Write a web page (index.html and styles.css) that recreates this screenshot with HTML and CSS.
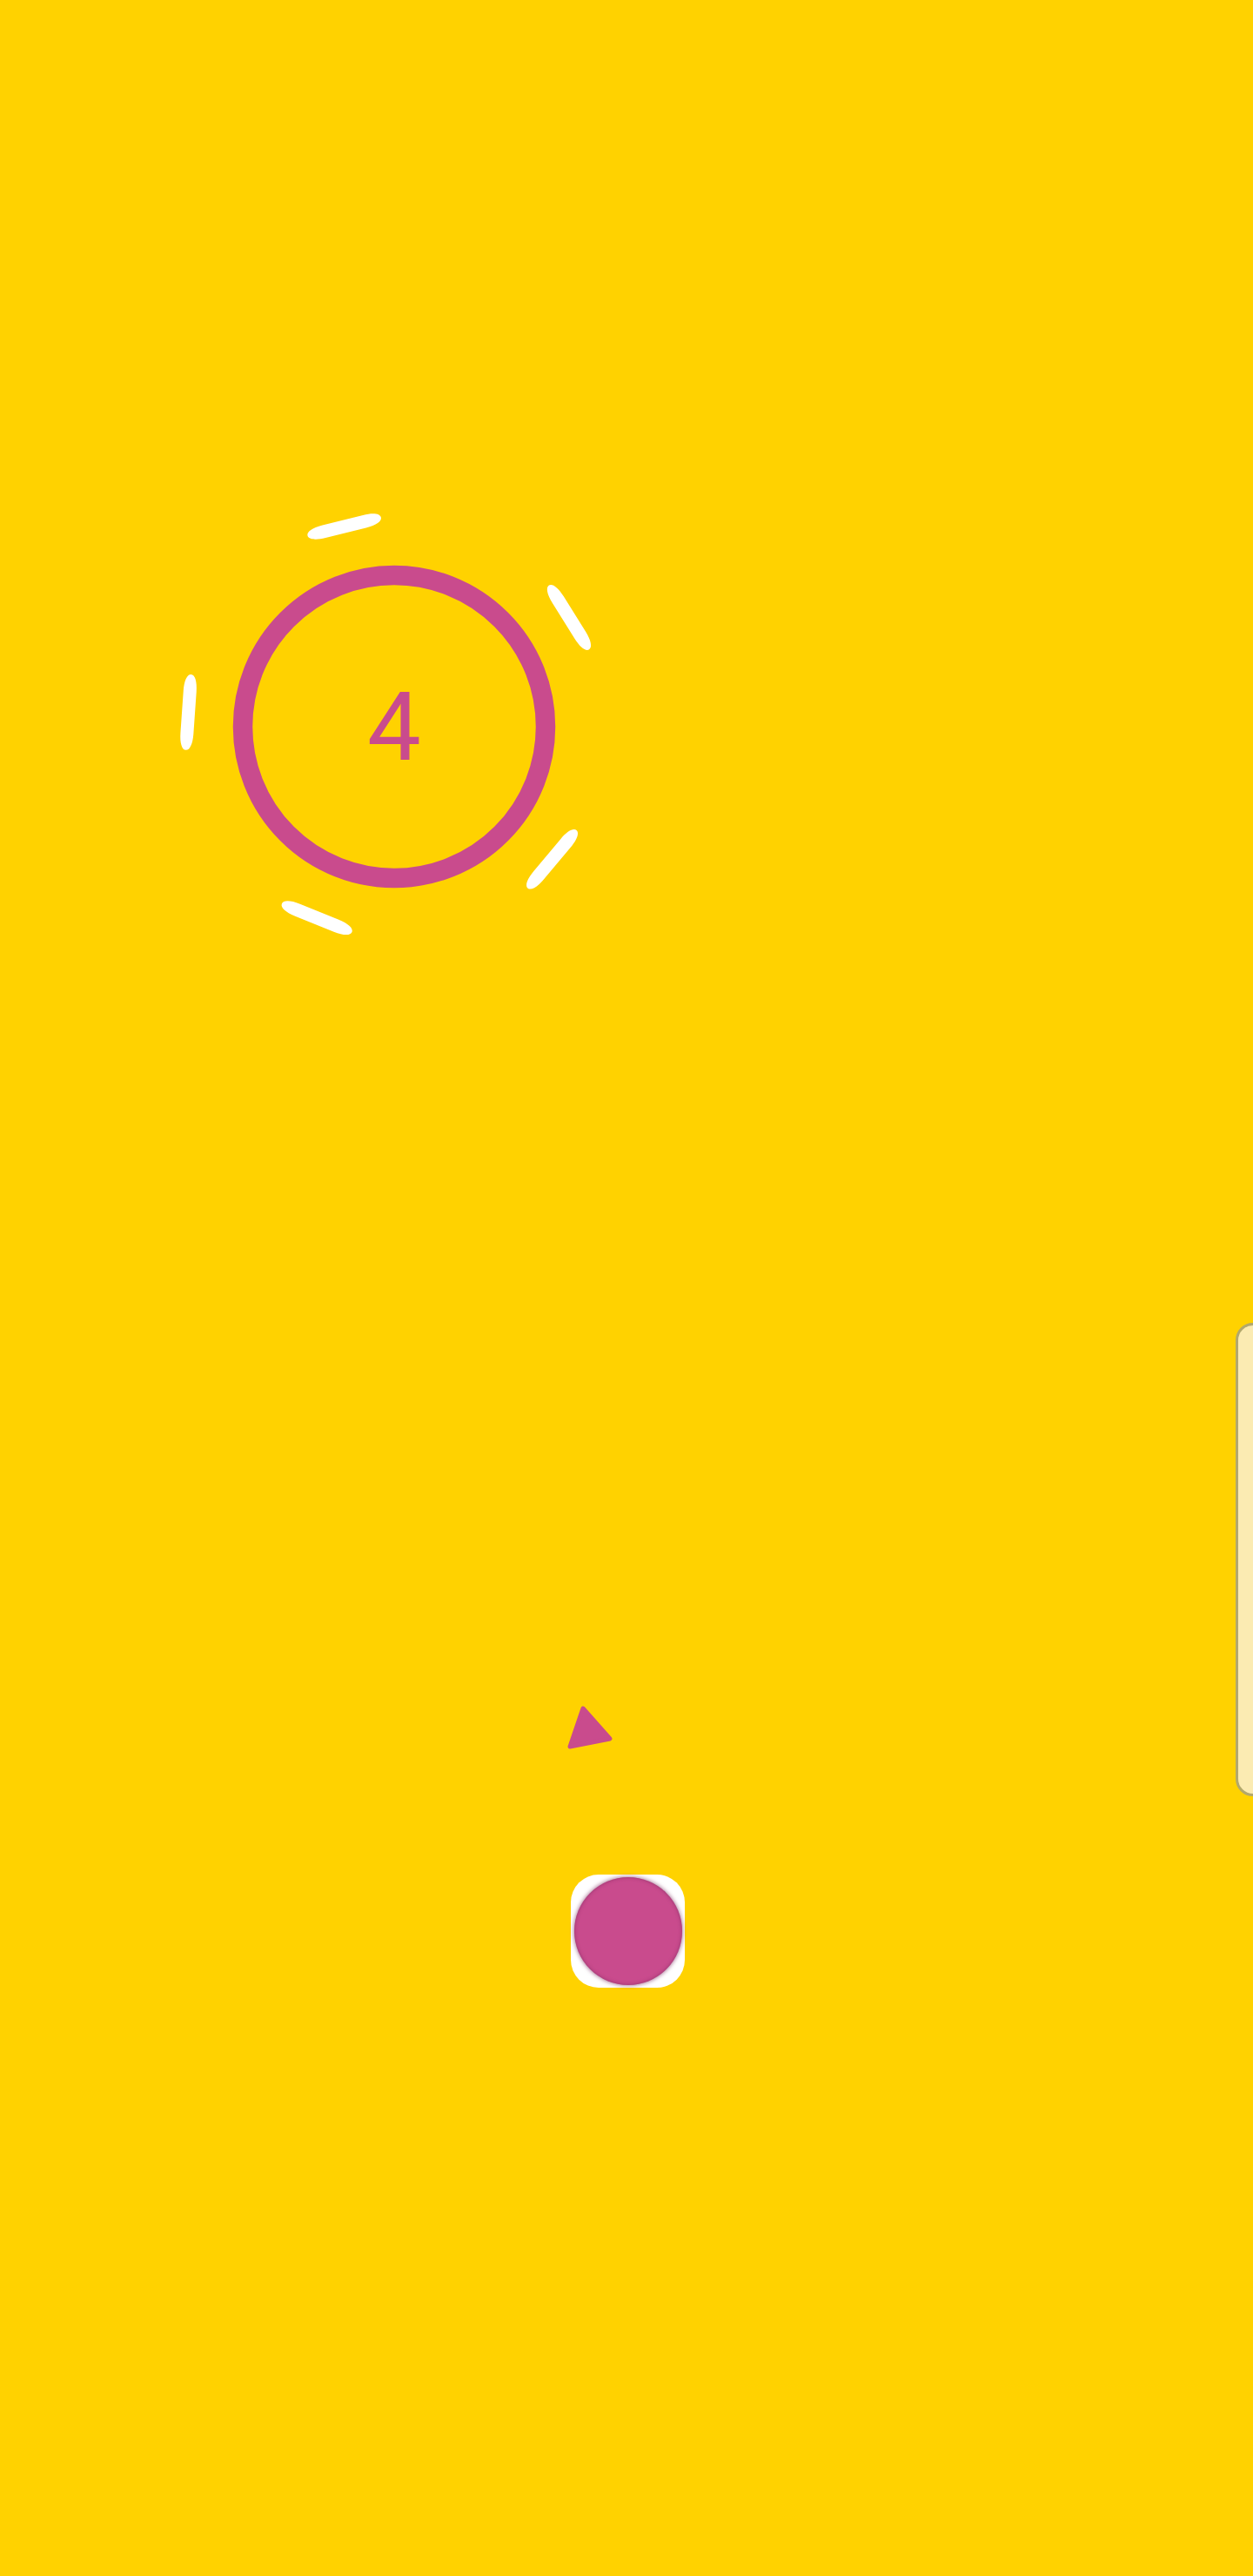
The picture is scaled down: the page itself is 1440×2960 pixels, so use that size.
FILE: index.html
```html
<!DOCTYPE html>
<html>
<head>
<meta charset="utf-8">
<link rel="stylesheet" href="styles.css">
</head>
<body>
<div class="stage">
  <div class="orbit">
    <svg class="orbit-svg" width="500" height="500" viewBox="0 0 500 500">
      <defs>
        <path id="dash" d="M487 206.5 C491.5 206.5 494.5 214 494.5 226 L494.5 274 C494.5 286 491.5 293.5 487 293.5 C482.5 293.5 479.5 286 479.5 274 L479.5 226 C479.5 214 482.5 206.5 487 206.5 Z"/>
      </defs>
      <circle cx="250" cy="250" r="174" fill="none" stroke="#c94b8d" stroke-width="22.5"/>
      <g fill="#ffffff">
        <use href="#dash" transform="rotate(-104 250 250)"/>
        <use href="#dash" transform="rotate(-32 250 250)"/>
        <use href="#dash" transform="rotate(40 250 250)"/>
        <use href="#dash" transform="rotate(112 250 250)"/>
        <use href="#dash" transform="rotate(184 250 250)"/>
      </g>
    </svg>
    <div class="count">4</div>
  </div>
  <div class="middle">
    <svg class="tri" width="80" height="80" viewBox="0 0 80 80">
      <polygon points="32,18 63,53 17,62" fill="#c94b8d" stroke="#c94b8d" stroke-width="5" stroke-linejoin="round"/>
    </svg>
    <div class="panel"></div>
  </div>
  <div class="btn"><div class="dot"></div></div>
</div>
</body>
</html>
```
FILE: styles.css
```css
html, body {
  margin: 0;
  padding: 0;
  background: #ffd200;
}
.stage {
  width: 1440px;
  height: 2960px;
  overflow: hidden;
  background: #ffd200;
  box-sizing: border-box;
  padding-top: 585px;
}
.orbit {
  margin-left: 203px;
  width: 500px;
  height: 500px;
  display: grid;
  place-items: center;
}
.orbit-svg, .count {
  grid-area: 1 / 1;
}
.orbit-svg {
  display: block;
}
.count {
  font-family: Roboto, "Liberation Sans", sans-serif;
  font-size: 110px;
  line-height: 1;
  color: #c94b8d;
  padding-left: 0;
  padding-top: 2px;
}
.middle {
  display: flex;
  align-items: flex-start;
  margin-top: 435px;
}
.tri {
  display: block;
  margin-left: 638px;
  margin-top: 425px;
  flex: none;
}
.panel {
  margin-left: auto;
  margin-right: -40px;
  width: 60px;
  height: 544px;
  box-sizing: border-box;
  border: 3px solid #b2a86c;
  border-radius: 20px;
  background: #fbebb2;
  flex: none;
}
.btn {
  margin-top: 90px;
  margin-left: 656px;
  width: 131px;
  height: 130px;
  border-radius: 32px;
  background: #ffffff;
  display: grid;
  place-items: center;
}
.dot {
  width: 124px;
  height: 124px;
  border-radius: 50%;
  background: #c94b8d;
  box-shadow: 0 0 4px 1px rgba(120, 40, 90, 0.55), inset 0 0 4px rgba(100, 30, 80, 0.5);
}
```
